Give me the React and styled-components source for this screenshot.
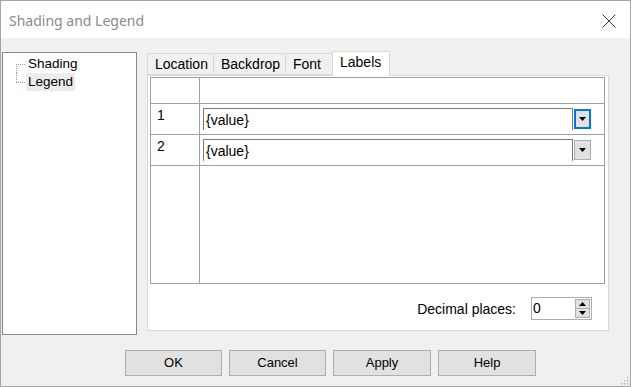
import React from "react";
import styled, { createGlobalStyle } from "styled-components";

const GlobalStyle = createGlobalStyle`
  html, body {
    margin: 0;
    padding: 0;
    background: #fff;
  }
  body {
    font-family: "Liberation Sans", Arial, sans-serif;
  }
`;

const Window = styled.div`
  width: 631px;
  height: 387px;
  box-sizing: border-box;
  border: 1px solid #a5a5a5;
  background: #f0f0f0;
  display: flex;
  flex-direction: column;
  font-family: "Liberation Sans", Arial, sans-serif;
  font-size: 14px;
  color: #000;
`;

const TitleBar = styled.div`
  height: 37px;
  flex: none;
  background: #fff;
  display: flex;
  align-items: center;
  justify-content: space-between;
  padding: 2px 14px 0 8px;
  box-sizing: border-box;
`;

const Title = styled.span`
  font-family: "Noto Sans", "Open Sans", sans-serif;
  font-size: 14px;
  color: #8a8a8a;
`;

const Content = styled.div`
  display: flex;
  align-items: flex-start;
  padding: 13px 0 0 1px;
  height: 284px;
  flex: none;
`;

const Tree = styled.div`
  width: 135px;
  height: 283px;
  box-sizing: border-box;
  margin-top: 1px;
  border: 1px solid #828790;
  background: #fff;
  padding-top: 2px;
`;

const TreeRow = styled.div`
  display: flex;
  height: 18px;
  padding-left: 13px;
`;

const Connector = styled.span`
  width: 10px;
  height: 18px;
  flex: none;
  background:
    repeating-linear-gradient(to right, #9a9a9a 0 1px, transparent 1px 2px) 0 9px / 10px 1px no-repeat,
    repeating-linear-gradient(to bottom, #9a9a9a 0 1px, transparent 1px 2px)
      0 ${(p) => (p.$first ? "9px" : "0")} / 1px ${(p) => (p.$first || p.$last ? "9px" : "18px")} no-repeat;
`;

const TreeLabel = styled.span`
  padding: 0 2px;
  line-height: 18px;
  font-size: 13.5px;
  background: ${(p) => (p.$selected ? "#ececec" : "transparent")};
`;

const TabArea = styled.div`
  margin-left: 10px;
  width: 462px;
  display: flex;
  flex-direction: column;
`;

const TabStrip = styled.div`
  display: flex;
  align-items: flex-end;
  height: 24px;
  position: relative;
  z-index: 1;
`;

const Tab = styled.div`
  box-sizing: border-box;
  width: ${(p) => p.$w}px;
  height: ${(p) => (p.$active ? 25 : 22)}px;
  margin-left: ${(p) => (p.$first ? 0 : p.$active ? -2 : -1)}px;
  margin-bottom: ${(p) => (p.$active ? -1 : 0)}px;
  padding-left: 7px;
  border: 1px solid #d9d9d9;
  border-bottom: ${(p) => (p.$active ? "none" : "1px solid #d9d9d9")};
  background: ${(p) => (p.$active ? "#fff" : "#f0f0f0")};
  line-height: ${(p) => (p.$active ? 21 : 20)}px;
  font-size: 14px;
  position: relative;
  z-index: ${(p) => (p.$active ? 2 : 0)};
`;

const Panel = styled.div`
  box-sizing: border-box;
  height: 256px;
  border: 1px solid #d9d9d9;
  background: #fff;
  padding: 1px 3px 0 2px;
  display: flex;
  flex-direction: column;
`;

const Grid = styled.div`
  box-sizing: border-box;
  width: 455px;
  height: 207px;
  border: 1px solid #a0a0a0;
  background: #a0a0a0;
  display: grid;
  grid-template-columns: 48px 1fr;
  grid-template-rows: 25px 30px 30px 1fr;
  gap: 1px;
`;

const Cell = styled.div`
  background: #fff;
  box-sizing: border-box;
  padding: ${(p) => (p.$num ? "3px 0 0 6px" : "4px 0 0 3px")};
  line-height: 16px;
`;

const Combo = styled.div`
  display: flex;
  align-items: flex-start;
  width: 388px;
`;

const ComboEdit = styled.div`
  box-sizing: border-box;
  width: 370px;
  height: 22px;
  border: 1px solid #7a7a7a;
  border-bottom: none;
  padding: 3px 0 0 2px;
  line-height: 16px;
`;

const DropButton = styled.div`
  box-sizing: border-box;
  width: 17px;
  height: 20px;
  margin: 1px 0 0 1px;
  background: #e1e1e1;
  border: ${(p) => (p.$focused ? "2px solid #0078d7" : "1px solid #adadad")};
  display: flex;
  align-items: center;
  justify-content: center;
`;

const DecimalRow = styled.div`
  display: flex;
  align-items: center;
  justify-content: flex-end;
  gap: 15px;
  margin-top: 13px;
  padding-right: 13px;
`;

const Spinner = styled.div`
  box-sizing: border-box;
  width: 61px;
  height: 23px;
  border: 1px solid #acacac;
  display: flex;
  justify-content: space-between;
  padding: 1px 1px 0 1px;
  line-height: 18px;
`;

const SpinButtons = styled.div`
  display: flex;
  flex-direction: column;
  width: 15px;
`;

const SpinButton = styled.div`
  box-sizing: border-box;
  height: 10px;
  margin-top: ${(p) => (p.$down ? -1 : 0)}px;
  background: #e1e1e1;
  border: 1px solid #adadad;
  display: flex;
  align-items: center;
  justify-content: center;
`;

const Footer = styled.div`
  flex: 1;
  display: flex;
  align-items: flex-start;
  padding: 15px 0 0 124px;
  gap: 7px;
`;

const Button = styled.div`
  box-sizing: border-box;
  width: ${(p) => p.$w}px;
  height: 26px;
  padding-bottom: 1px;
  background: #e1e1e1;
  border: 1px solid #adadad;
  font-size: 13px;
  display: flex;
  align-items: center;
  justify-content: center;
`;

const Grip = styled.svg`
  margin-left: auto;
  align-self: flex-end;
  margin-bottom: 1px;
  margin-right: 1px;
`;

const Arrow = ({ up }) => (
  <svg width="7" height="4" viewBox="0 0 7 4">
    <polygon points={up ? "3.5,0 7,4 0,4" : "0,0 7,0 3.5,4"} fill="#000" />
  </svg>
);

const tabs = [
  { label: "Location", w: 67 },
  { label: "Backdrop", w: 73 },
  { label: "Font", w: 49 },
  { label: "Labels", w: 58, active: true },
];

const buttons = [
  { label: "OK", w: 97 },
  { label: "Cancel", w: 97 },
  { label: "Apply", w: 98 },
  { label: "Help", w: 98 },
];

export default function App() {
  return (
    <>
      <GlobalStyle />
      <Window>
        <TitleBar>
          <Title>Shading and Legend</Title>
          <svg width="14" height="14" viewBox="0 0 14 14">
            <path d="M0.5 0.5 L13.5 13.5 M13.5 0.5 L0.5 13.5" stroke="#333" strokeWidth="1" />
          </svg>
        </TitleBar>
        <Content>
          <Tree>
            <TreeRow>
              <Connector $first />
              <TreeLabel>Shading</TreeLabel>
            </TreeRow>
            <TreeRow>
              <Connector $last />
              <TreeLabel $selected>Legend</TreeLabel>
            </TreeRow>
          </Tree>
          <TabArea>
            <TabStrip>
              {tabs.map((t, i) => (
                <Tab key={t.label} $w={t.w} $active={t.active} $first={i === 0}>
                  {t.label}
                </Tab>
              ))}
            </TabStrip>
            <Panel>
              <Grid>
                <Cell />
                <Cell />
                <Cell $num>1</Cell>
                <Cell>
                  <Combo>
                    <ComboEdit>{"{value}"}</ComboEdit>
                    <DropButton $focused>
                      <Arrow />
                    </DropButton>
                  </Combo>
                </Cell>
                <Cell $num>2</Cell>
                <Cell>
                  <Combo>
                    <ComboEdit>{"{value}"}</ComboEdit>
                    <DropButton>
                      <Arrow />
                    </DropButton>
                  </Combo>
                </Cell>
                <Cell />
                <Cell />
              </Grid>
              <DecimalRow>
                <span>Decimal places:</span>
                <Spinner>
                  <span>0</span>
                  <SpinButtons>
                    <SpinButton>
                      <Arrow up />
                    </SpinButton>
                    <SpinButton $down>
                      <Arrow />
                    </SpinButton>
                  </SpinButtons>
                </Spinner>
              </DecimalRow>
            </Panel>
          </TabArea>
        </Content>
        <Footer>
          {buttons.map((b) => (
            <Button key={b.label} $w={b.w}>
              {b.label}
            </Button>
          ))}
          <Grip width="10" height="10" viewBox="0 0 10 10">
            {[[8, 2], [8, 5], [5, 5], [8, 8], [5, 8], [2, 8]].map(([x, y]) => (
              <rect key={`${x}-${y}`} x={x} y={y} width="1.5" height="1.5" fill="#b8b8b8" />
            ))}
          </Grip>
        </Footer>
      </Window>
    </>
  );
}
